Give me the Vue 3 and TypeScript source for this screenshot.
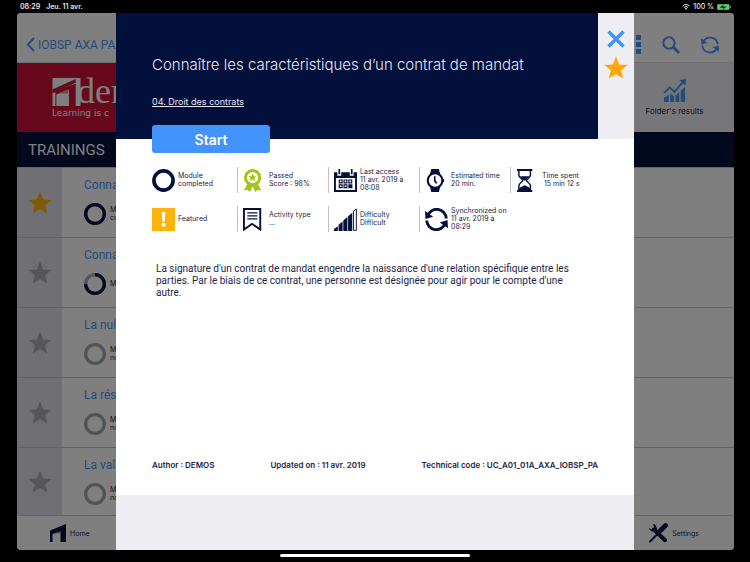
<script setup lang="ts">
interface Training {
  title: string
  status: string[]
  progress: number
  featured: boolean
}

interface Metric {
  icon: string
  lines: string[]
}

const trainings: Training[] = [
  { title: 'Connaître', status: ['Module', 'completed'], progress: 100, featured: true },
  { title: 'Connaître', status: ['Module'], progress: 75, featured: false },
  { title: 'La nul', status: ['Module', 'not'], progress: 0, featured: false },
  { title: 'La rés', status: ['Module', 'not'], progress: 0, featured: false },
  { title: 'La val', status: ['Module', 'not'], progress: 0, featured: false },
]

const metrics: Metric[] = [
  { icon: 'ring', lines: ['Module', 'completed'] },
  { icon: 'badge', lines: ['Passed', 'Score : 98%'] },
  { icon: 'calendar', lines: ['Last access', '11 avr. 2019 à', '08:08'] },
  { icon: 'watch', lines: ['Estimated time', '20 min.'] },
  { icon: 'hourglass', lines: ['Time spent', '\u00a015 min 12 s'] },
  { icon: 'featured', lines: ['Featured'] },
  { icon: 'bookmark', lines: ['Activity type', '...'] },
  { icon: 'bars', lines: ['Difficulty', 'Difficult'] },
  { icon: 'sync', lines: ['Synchronized on', '11 avr. 2019 à', '08:29'] },
]

const starPoints = '12,0.5 15.2,8.4 23.6,8.9 17.2,14.3 19.2,22.6 12,18.1 4.8,22.6 6.8,14.3 0.4,8.9 8.8,8.4'
</script>

<template>
  <div class="screen">
    <header class="status-bar">
      <span class="status-left"><span>08:29</span><span>Jeu. 11 avr.</span></span>
      <span class="status-right">
        <svg class="wifi" viewBox="0 0 16 12">
          <path d="M1 4.2a10.5 10.5 0 0 1 14 0M3.6 7a6.6 6.6 0 0 1 8.8 0" fill="none" stroke="#e8e8e8" stroke-width="2" />
          <path d="M5.5 9a4 4 0 0 1 5 0L8 11.8z" fill="#e8e8e8" />
        </svg>
        <span>100 %</span>
        <svg class="battery" viewBox="0 0 28 12">
          <rect x="0.5" y="0.5" width="24" height="11" rx="2.5" fill="#4cd964" stroke="#9aa59c" />
          <path d="M26 4v4a2 2 0 0 0 0-4z" fill="#9aa59c" />
          <path d="M5 7.500l8-6.500-.8 4h7.500l-8 6 .8-3.500z" fill="#0b2a12" />
        </svg>
      </span>
    </header>

    <div class="frame">
      <nav class="nav">
        <a class="back" href="#">
          <svg viewBox="0 0 9 15"><path d="M8 1L1.800 7.500 8 14" fill="none" stroke="#4696ff" stroke-width="2" /></svg>
          <span>IOBSP AXA PA</span>
        </a>
        <div class="nav-actions">
          <button type="button" aria-label="Menu">
            <svg class="dots" viewBox="0 0 19 19" fill="#4696ff">
              <path d="M0 0h5v5H0zM7 0h5v5H7zM14 0h5v5h-5zM0 7h5v5H0zM7 7h5v5H7zM14 7h5v5h-5zM0 14h5v5H0zM7 14h5v5H7zM14 14h5v5h-5z" />
            </svg>
          </button>
          <button type="button" aria-label="Search">
            <svg class="nav-icon" viewBox="0 0 18 18" fill="none" stroke="#4696ff">
              <circle cx="7" cy="7" r="5.700" stroke-width="2" />
              <path d="M11 11l6 6" stroke-width="2.800" />
            </svg>
          </button>
          <button type="button" aria-label="Refresh">
            <svg class="nav-icon" viewBox="0 0 24 24">
              <path d="M2.800 8A10.300 10.300 0 0 1 22.300 11M21.200 16A10.300 10.300 0 0 1 1.700 13" fill="none" stroke="#4696ff" stroke-width="2.400" />
              <path d="M0 3l.5 8.500 8-2.500zM24 21l-.5-8.500-8 2.500z" fill="#4696ff" />
            </svg>
          </button>
        </div>
      </nav>

      <section class="banner">
        <div class="brand">
          <div class="brand-line">
            <svg class="brand-mark" viewBox="0 0 29 30">
              <path d="M0 0h29v29h-5V6L0 14z" fill="#fff" />
              <path d="M0 12L24 1v4L0 16z" fill="#cf1138" />
              <path d="M4 17l13-5v17H4z" fill="#fff" />
              <path d="M5 16l11-4v4z" fill="#e68a9c" />
              <path d="M0 15h3v14H0z" fill="#fff" />
            </svg>
            <span class="brand-name">dem</span>
          </div>
          <div class="brand-tag">Learning is c</div>
        </div>
        <a class="results" href="#">
          <svg viewBox="0 0 24 24">
            <path d="M1 19.500l5-3V24H1zM7.500 15l4 3v6h-4zM13 17.500l4-4V24h-4zM18.500 12l4.500-4v16h-4.500z" fill="#4696ff" />
            <path d="M1 14.500l6-5.500 5 4.500L21 3" fill="none" stroke="#4696ff" stroke-width="2" />
            <path d="M17 1l7-1-.5 7z" fill="#4696ff" />
          </svg>
          <span>Folder's results</span>
        </a>
      </section>

      <h2 class="section-title">TRAININGS</h2>

      <ul class="trainings">
        <li v-for="(item, i) in trainings" :key="i" class="training">
          <div class="training-star">
            <svg viewBox="0 0 24 24"><polygon :points="starPoints" :fill="item.featured ? '#ffb400' : '#acacb4'" /></svg>
          </div>
          <div class="training-body">
            <a class="training-title" href="#">{{ item.title }}</a>
            <div class="training-status">
              <svg viewBox="0 0 24 24">
                <circle cx="12" cy="12" r="10.200" fill="none" stroke="#a6a6ac" stroke-width="3.600" />
                <circle
                  v-if="item.progress"
                  cx="12" cy="12" r="10.200" fill="none" stroke="#04103c" stroke-width="3.600"
                  pathLength="100" :stroke-dasharray="`${item.progress} ${100 - item.progress}`" transform="rotate(-90 12 12)"
                />
              </svg>
              <span><span v-for="line in item.status" :key="line" class="line">{{ line }}</span></span>
            </div>
          </div>
        </li>
      </ul>

      <nav class="tabs">
        <a href="#">
          <svg class="tab-home" viewBox="0 0 16 18"><path d="M0 6.500L16 0v18h-5.500V7.500L2.500 10v8H0z" fill="#04103c" /><path d="M3.500 9.500l7-2.500v2z" fill="#6f7590" /></svg>
          <span>Home</span>
        </a>
        <a href="#">
          <svg class="tab-tools" viewBox="0 0 20 20">
            <path d="M2 18.500l8-8" stroke="#04103c" stroke-width="1.800" stroke-linecap="round" />
            <path d="M12 8l5.500-5.500" stroke="#04103c" stroke-width="4.600" stroke-linecap="round" />
            <path d="M6 6.500l11 10.700" stroke="#04103c" stroke-width="4" stroke-linecap="round" />
            <path d="M5.200.8a5 5 0 0 1 3.300 6.700A5 5 0 0 1 .7 5l3 1.400L6 4.200z" fill="#04103c" />
          </svg>
          <span>Settings</span>
        </a>
      </nav>

      <div class="overlay">
        <article class="modal" role="dialog" aria-labelledby="module-title">
          <header class="modal-head">
            <div class="modal-heading">
              <h1 id="module-title">Connaître les caractéristiques d’un contrat de mandat</h1>
              <a href="#">04. Droit des contrats</a>
            </div>
            <div class="modal-side">
              <button type="button" aria-label="Close">
                <svg class="close" viewBox="0 0 18 18"><path d="M1.500 1.500l15 15M16.500 1.500l-15 15" stroke="#3e92f8" stroke-width="3.200" /></svg>
              </button>
              <button type="button" aria-label="Favourite">
                <svg class="favourite" viewBox="0 0 24 24"><polygon :points="starPoints" fill="#ffa70a" /></svg>
              </button>
            </div>
          </header>

          <div class="modal-body">
            <button type="button" class="start">Start</button>

            <ul class="metrics">
              <li v-for="metric in metrics" :key="metric.icon" class="metric">
                <svg v-if="metric.icon === 'ring'" viewBox="0 0 24 24">
                  <circle cx="12" cy="12" r="10" fill="none" stroke="#04103c" stroke-width="3.800" />
                </svg>
                <svg v-else-if="metric.icon === 'badge'" viewBox="0 0 24 24">
                  <path d="M5 14.500L1 22.500l4-.6L7.200 24l3.300-7zM15 14.500l4 8-4-.6L12.800 24 9.500 17z" fill="#a3c614" />
                  <circle cx="10" cy="9" r="7.300" fill="#fff" stroke="#a3c614" stroke-width="3" />
                  <circle cx="10" cy="9" r="8.300" fill="none" stroke="#a3c614" stroke-width="1.600" stroke-dasharray="2.500 1.800" />
                  <path d="M10 4.500l1.300 3h3.200l-2.500 2 .9 3.200L10 10.900l-2.900 1.800.9-3.200-2.500-2h3.200z" fill="#a3c614" />
                </svg>
                <svg v-else-if="metric.icon === 'calendar'" viewBox="0 0 24 24">
                  <path d="M0 3.500h3.500V7h4V3.500h9V7h4V3.500H24V24H0z" fill="#04103c" />
                  <path d="M4.600 0h1.800v5.500H4.600zM17.600 0h1.800v5.500h-1.800z" fill="#04103c" />
                  <path d="M2 9.500h20V22H2z" fill="#fff" />
                  <path d="M5.500 11.500h3v3h-3zM10.500 11.500h3v3h-3zM15.500 11.500h3v3h-3zM5.500 16.500h3v3h-3zM10.500 16.500h3v3h-3z" fill="none" stroke="#04103c" stroke-width="1.200" />
                  <path d="M15 16h4.200v4.200H15z" fill="#04103c" />
                </svg>
                <svg v-else-if="metric.icon === 'watch'" viewBox="0 0 24 24">
                  <path d="M6.500 0h8L16 6H5zM6.500 24h8l1.500-6H5z" fill="#04103c" />
                  <circle cx="10.500" cy="12" r="7.600" fill="#fff" stroke="#04103c" stroke-width="2.200" />
                  <path d="M18.500 10.500H20v3h-1.500z" fill="#04103c" />
                  <path d="M10.200 7.500v5l2 2.500" fill="none" stroke="#04103c" stroke-width="1.700" />
                </svg>
                <svg v-else-if="metric.icon === 'hourglass'" viewBox="0 0 24 24">
                  <path d="M1 0h16v2.200H1zM1 21.800h16V24H1z" fill="#04103c" />
                  <path d="M3 2v4.500c0 3 4 4 4 5.500s-4 2.500-4 5.500V22M15 2v4.500c0 3-4 4-4 5.500s4 2.500 4 5.500V22" fill="none" stroke="#04103c" stroke-width="1.500" />
                  <path d="M4 7.500h10c-1 2-3.500 3-4 4.500H8c-.5-1.500-3-2.500-4-4.500zM3 22c0-3 3-3.500 6-5 3 1.500 6 2 6 5z" fill="#04103c" />
                </svg>
                <svg v-else-if="metric.icon === 'featured'" viewBox="0 0 24 24">
                  <path d="M0 0h24v24H0z" fill="#fcb40c" />
                  <path d="M10.200 4.500h3.800l-.5 9.500h-2.800z" fill="#fff" />
                  <circle cx="12.100" cy="17.600" r="2.100" fill="#fff" />
                </svg>
                <svg v-else-if="metric.icon === 'bookmark'" viewBox="0 0 24 24">
                  <path d="M1 1h17v21.500l-8.500-6-8.500 6z" fill="#fff" stroke="#04103c" stroke-width="2" />
                  <path d="M4.500 5.200h10.500M4.500 8.300h10.500M4.500 11.400h10.500" stroke="#04103c" stroke-width="1.300" />
                </svg>
                <svg v-else-if="metric.icon === 'bars'" viewBox="0 0 24 24">
                  <path d="M0 24v-2l4-3V24zM4.800 24v-6.500L9 14V24zM9.700 24V13L14 9.500V24zM14.700 24V8.500L19 5v19z" fill="#04103c" />
                  <path d="M20.300 23.300V3.500L23.300 1v22.300z" fill="#fff" stroke="#04103c" stroke-width="1" />
                </svg>
                <svg v-else viewBox="0 0 24 24">
                  <path d="M2.800 8A10 10 0 0 1 22.200 11M21.200 16A10 10 0 0 1 1.800 13" fill="none" stroke="#04103c" stroke-width="3" />
                  <path d="M0 3l.5 8.500 8-2.500zM24 21l-.5-8.500-8 2.500z" fill="#04103c" />
                </svg>
                <span><span v-for="line in metric.lines" :key="line" class="line">{{ line }}</span></span>
              </li>
            </ul>

            <p class="description">
              La signature d'un contrat de mandat engendre la naissance d'une relation spécifique entre les
              parties. Par le biais de ce contrat, une personne est désignée pour agir pour le compte d'une
              autre.
            </p>

            <footer class="meta">
              <span>Author : DEMOS</span>
              <span>Updated on : 11 avr. 2019</span>
              <span>Technical code : UC_A01_01A_AXA_IOBSP_PA</span>
            </footer>
          </div>
          <div class="modal-foot"></div>
        </article>
      </div>
    </div>

    <div class="home-area"><span class="home-indicator"></span></div>
  </div>
</template>

<style>
body {
  background: #000;
}
</style>

<style scoped>
.screen,
.screen * {
  box-sizing: border-box;
}
.screen {
  display: flex;
  flex-direction: column;
  min-height: 100vh;
  background: #000;
  color: #1c2447;
  font-family: Inter, "Liberation Sans", sans-serif;
}
ul,
h1,
h2,
p {
  margin: 0;
  padding: 0;
  list-style: none;
}
a {
  color: inherit;
  text-decoration: none;
}
button {
  display: block;
  padding: 0;
  border: 0;
  background: none;
  font-family: inherit;
}
svg {
  display: block;
  flex: none;
}
.line {
  display: block;
  white-space: nowrap;
}
.status-bar {
  display: flex;
  justify-content: space-between;
  height: 13px;
  padding: 0 19px 0 20px;
  color: #e8e8e8;
  font-size: 7px;
  font-weight: 600;
  line-height: 12px;
}
.status-left,
.status-right {
  display: flex;
  align-items: center;
}
.status-left {
  gap: 6px;
}
.status-right {
  gap: 3px;
}
.status-right span {
  font-weight: 500;
}
.wifi {
  width: 8px;
  height: 6px;
}
.battery {
  width: 14px;
  height: 6px;
}
.frame {
  position: relative;
  flex: 1;
  display: flex;
  flex-direction: column;
  margin: 0 16px 0 17px;
  border-radius: 4px;
  overflow: hidden;
  background: #fff;
}
.nav {
  display: flex;
  justify-content: space-between;
  align-items: center;
  height: 50px;
  padding: 14px 15px 0 9px;
  border-bottom: 1px solid #d8d8dc;
}
.back {
  display: flex;
  align-items: center;
  gap: 3px;
  color: #4696ff;
  font-family: Roboto, Inter, sans-serif;
  font-size: 12px;
  white-space: nowrap;
}
.back svg {
  width: 9px;
  height: 15px;
}
.nav-actions {
  display: flex;
  align-items: center;
  gap: 21px;
}
.dots {
  width: 19px;
  height: 19px;
}
.nav-icon {
  width: 18px;
  height: 18px;
}
.banner {
  display: flex;
  justify-content: space-between;
  height: 69px;
  background: #eeedf2;
}
.brand {
  width: 160px;
  padding: 14px 0 0 35px;
  background: #cf1138;
  color: #fff;
}
.brand-line {
  display: flex;
  align-items: flex-end;
  height: 30px;
}
.brand-mark {
  width: 29px;
  height: 29px;
}
.brand-name {
  margin-left: -4px;
  font-family: "Liberation Serif", serif;
  font-size: 36px;
  line-height: 32px;
}
.brand-tag {
  margin-top: 1px;
  font-family: "DejaVu Sans", sans-serif;
  font-size: 9px;
  line-height: 10px;
  white-space: nowrap;
}
.results {
  display: flex;
  flex-direction: column;
  align-items: center;
  gap: 3px;
  width: 119px;
  padding-top: 16px;
  font-size: 8px;
  line-height: 12px;
}
.results svg {
  width: 23px;
  height: 23px;
}
.section-title {
  height: 35px;
  padding-left: 11px;
  background: #04103c;
  color: #fff;
  font-family: Roboto, Inter, sans-serif;
  font-size: 15px;
  font-weight: 400;
  line-height: 36px;
}
.trainings {
  flex: 1;
  display: grid;
  grid-template-rows: repeat(4, 70px) minmax(68px, 1fr);
}
.training {
  display: flex;
  border-top: 1px solid #c4c4ca;
}
.training-star {
  display: flex;
  align-items: center;
  justify-content: center;
  width: 45px;
  background: #e0dfe8;
}
.training-star svg {
  width: 24px;
  height: 24px;
}
.training-body {
  padding: 9px 0 0 22px;
}
.training-title {
  display: block;
  color: #4696ff;
  font-family: Roboto, Inter, sans-serif;
  font-size: 12px;
  line-height: 16px;
}
.training-status {
  display: flex;
  align-items: center;
  gap: 4px;
  margin-top: 9px;
  font-size: 7px;
  line-height: 8px;
}
.training-status svg {
  width: 22px;
  height: 24px;
}
.tabs {
  display: flex;
  justify-content: space-between;
  height: 35px;
  padding: 0 35px 0 33px;
  border-top: 1px solid #c4c4ca;
  font-size: 7px;
}
.tabs a {
  display: flex;
  align-items: center;
  gap: 4px;
}
.tab-home {
  width: 16px;
  height: 18px;
}
.tab-tools {
  width: 20px;
  height: 20px;
}
.overlay {
  position: absolute;
  inset: 0;
  display: grid;
  grid-template-columns: minmax(0, 1fr);
  padding: 0 100px 0 99px;
  background: rgba(0, 0, 0, 0.5);
}
.modal {
  display: flex;
  flex-direction: column;
  background: #fff;
}
.modal-head {
  display: flex;
  height: 126px;
  background: #04103c;
}
.modal-heading {
  flex: 1;
  padding: 42px 0 0 36px;
  color: #e4e6f2;
  font-size: 9px;
  line-height: 12px;
}
.modal-heading h1 {
  margin-bottom: 21px;
  font-size: 15px;
  font-weight: 300;
  line-height: 20px;
}
.modal-heading a {
  text-decoration: underline;
}
.modal-side {
  display: flex;
  flex-direction: column;
  align-items: center;
  gap: 8px;
  width: 36px;
  padding-top: 17px;
  background: #eeedf2;
}
.close {
  width: 18px;
  height: 18px;
}
.favourite {
  width: 24px;
  height: 24px;
}
.modal-body {
  flex: 1;
  display: flex;
  flex-direction: column;
  padding: 0 36px 25px;
}
.start {
  width: 118px;
  height: 28px;
  margin-top: -14px;
  border-radius: 3px;
  background: #4393fc;
  color: #fff;
  font-size: 14px;
  font-weight: 600;
}
.metrics {
  display: grid;
  grid-template-columns: repeat(4, 91px) 1fr;
  row-gap: 13px;
  margin: 14px 0 0 -6px;
}
.metric {
  display: flex;
  align-items: center;
  gap: 3px;
  height: 26px;
  padding-left: 5px;
  border-left: 1px solid #c0c0c6;
  font-size: 7px;
  line-height: 8px;
}
.metric:nth-child(5n + 1) {
  border-left-color: transparent;
}
.metric svg {
  width: 23px;
  height: 23px;
}
.description {
  margin-top: 31px;
  padding: 0 12px 0 4px;
  font-family: Roboto, Inter, sans-serif;
  font-size: 10px;
  line-height: 12px;
}
.meta {
  display: flex;
  justify-content: space-between;
  margin-top: auto;
  font-size: 8px;
  font-weight: 600;
  line-height: 10px;
}
.modal-foot {
  height: 55px;
  background: #eeedf2;
}
.home-area {
  display: flex;
  justify-content: center;
  height: 12px;
  padding-top: 4px;
}
.home-indicator {
  width: 190px;
  height: 3px;
  border-radius: 2px;
  background: #fff;
}
</style>
